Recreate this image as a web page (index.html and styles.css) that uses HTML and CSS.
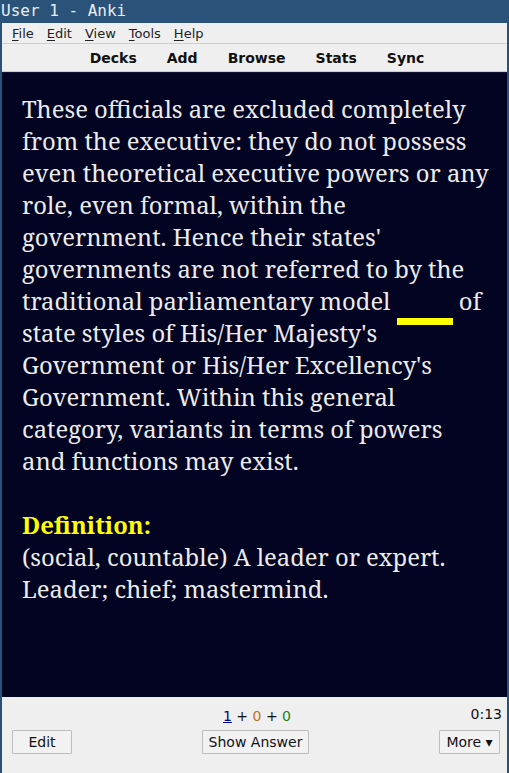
FILE: index.html
```html
<!DOCTYPE html>
<html>
<head>
<meta charset="utf-8">
<link rel="stylesheet" href="styles.css">
</head>
<body>
<div class="window">
  <div class="titlebar">User 1 - Anki</div>
  <div class="frame">
    <div class="menubar">
      <span class="menu"><u>F</u>ile</span>
      <span class="menu"><u>E</u>dit</span>
      <span class="menu"><u>V</u>iew</span>
      <span class="menu"><u>T</u>ools</span>
      <span class="menu"><u>H</u>elp</span>
    </div>
    <div class="toolbar">
      <span class="tb">Decks</span>
      <span class="tb">Add</span>
      <span class="tb">Browse</span>
      <span class="tb">Stats</span>
      <span class="tb">Sync</span>
    </div>
    <div class="card">
      <p class="text">These officials are excluded completely from the executive: they do not possess even theoretical executive powers or any role, even formal, within the government. Hence their states' governments are not referred to by the traditional parliamentary model <span class="cloze"></span> of state styles of His/Her Majesty's Government or His/Her Excellency's Government. Within this general category, variants in terms of powers and functions may exist.</p>
      <p class="def"><span class="label">Definition:</span><br>(social, countable) A leader or expert. Leader; chief; mastermind.</p>
    </div>
    <div class="bottom">
      <div class="counts-row">
        <span class="counts"><u class="new">1</u> + <span class="lrn">0</span> + <span class="rev">0</span></span>
        <span class="timer">0:13</span>
      </div>
      <div class="buttons">
        <button class="btn edit">Edit</button>
        <button class="btn show">Show Answer</button>
        <button class="btn more">More ▾</button>
      </div>
    </div>
  </div>
</div>
</body>
</html>
```
FILE: styles.css
```css
html, body {
  margin: 0;
  padding: 0;
  height: 100%;
  overflow: hidden;
}
body {
  background: #2a5279;
}
.window {
  display: flex;
  flex-direction: column;
  height: 773px;
  width: 509px;
}
.titlebar {
  height: 23px;
  line-height: 21px;
  padding-left: 1px;
  font-family: "DejaVu Sans Mono", monospace;
  font-size: 16px;
  color: #e8eef5;
  background: #2b5278;
}
.frame {
  flex: 1;
  display: flex;
  flex-direction: column;
  margin: 0 2px 0 2px;
  background: #efefef;
}
.menubar {
  height: 20px;
  display: flex;
  align-items: center;
  padding-left: 8px;
  font-family: "DejaVu Sans", sans-serif;
  font-size: 13px;
  color: #222;
  border-bottom: 1px solid #cfcfcf;
}
.menu {
  padding: 0 2px;
  margin-right: 9px;
}
.menu u {
  text-decoration-thickness: 1px;
  text-underline-offset: 2px;
}
.toolbar {
  height: 27px;
  display: flex;
  align-items: center;
  justify-content: center;
  padding-left: 5px;
  font-family: "DejaVu Sans", sans-serif;
  font-weight: bold;
  font-size: 14px;
  color: #111;
  border-bottom: 1px solid #ccc;
}
.tb {
  padding: 0 15px;
}
.card {
  flex: 1;
  background: #030322;
  border-top: 1px solid #101030;
  padding: 20px 16px 0 20px;
  font-family: "Noto Serif", "DejaVu Serif", serif;
  font-size: 23.8px;
  line-height: 32px;
  color: #ececec;
  overflow: hidden;
}
.card p {
  margin: 0;
}
.text {
  margin-bottom: 32px !important;
}
.cloze {
  display: inline-block;
  width: 56px;
  height: 7px;
  background: #ffff00;
  vertical-align: baseline;
  transform: translateY(15px);
}
.label {
  color: #ffff00;
  font-weight: bold;
}
.bottom {
  height: 76px;
  flex: none;
  font-family: "DejaVu Sans", sans-serif;
  font-size: 14px;
  color: #111;
  padding: 0 5px 0 10px;
}
.counts-row {
  position: relative;
  height: 33px;
  display: flex;
  align-items: center;
  justify-content: center;
  padding-top: 4px;
  box-sizing: border-box;
}
.new { color: #000090; }
.lrn { color: #c07020; }
.rev { color: #208020; }
.timer {
  position: absolute;
  right: 0;
  top: 9px;
}
.buttons {
  display: flex;
  justify-content: space-between;
  align-items: center;
  padding-right: 2px;
}
.btn {
  box-sizing: border-box;
  font-family: "DejaVu Sans", sans-serif;
  font-size: 14px;
  color: #111;
  background: #f2f2f2;
  border: 1px solid #bdbdbd;
  border-radius: 1px;
  height: 24px;
  padding: 0 4px;
}
.edit { width: 60px; }
.show { width: 107px; }
.more { width: 61px; }
```
